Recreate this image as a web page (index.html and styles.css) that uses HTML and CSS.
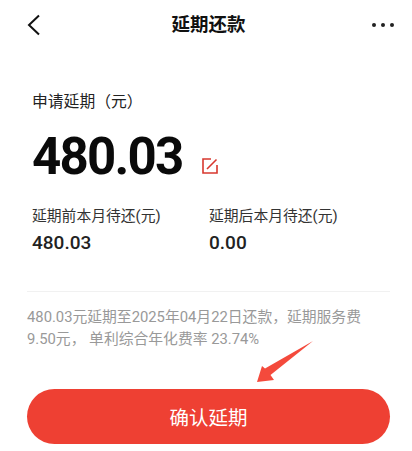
FILE: index.html
```html
<!DOCTYPE html>
<html lang="zh-CN">
<head>
<meta charset="utf-8">
<title>延期还款</title>
<link rel="stylesheet" href="styles.css">
</head>
<body>
<div class="page">
  <header class="nav">
    <svg class="back" width="14" height="22" viewBox="0 0 14 22"><path d="M12 1.5 2 11l10 9.5" fill="none" stroke="#111" stroke-width="2"/></svg>
    <h1 class="title">延期还款</h1>
    <div class="more"><i></i><i></i><i></i></div>
  </header>
  <main class="content">
    <div class="label">申请延期（元）</div>
    <div class="amount-row">
      <span class="amount">480.03</span>
      <svg class="edit" width="16" height="16" viewBox="0 0 16 16"><path d="M9 1H1v14h14V7" fill="none" stroke="#d8382f" stroke-width="1.6"/><path d="M5 11 14.5 1.5" fill="none" stroke="#d8382f" stroke-width="1.6"/></svg>
    </div>
    <div class="stats">
      <div class="stat">
        <div class="stat-label">延期前本月待还(元)</div>
        <div class="stat-value">480.03</div>
      </div>
      <div class="stat">
        <div class="stat-label">延期后本月待还(元)</div>
        <div class="stat-value">0.00</div>
      </div>
    </div>
  </main>
  <p class="note">480.03元延期至2025年04月22日还款，延期服务费9.50元， 单利综合年化费率 23.74%</p>
  <div class="action">
    <svg class="arrow" width="57" height="42" viewBox="0 0 57 42"><path d="M56 0 8 27.5 5 25 0 41 17 39 13.5 34Z" fill="#f44a3c"/></svg>
    <button class="confirm">确认延期</button>
  </div>
</div>
</body>
</html>
```
FILE: styles.css
```css
* { box-sizing: border-box; }
html, body { margin: 0; padding: 0; background: #fff; }
body { font-family: Roboto, "Noto Sans CJK SC", sans-serif; }
.page { width: 412px; height: 451px; overflow: hidden; display: flex; flex-direction: column; padding: 0 22px 7px 27px; }
.nav { height: 50px; display: grid; grid-template-columns: 1fr auto 1fr; align-items: center; margin-right: -4px; padding-right: 4px; }
.title { margin: 0; font-size: 18.5px; line-height: 24px; font-weight: 700; color: #111; }
.more { display: flex; gap: 5px; justify-self: end; margin-right: -4px; }
.more i { width: 4px; height: 4px; border-radius: 50%; background: #222; }
.content { padding: 41px 0 0 5px; }
.label { font-size: 15.8px; line-height: 22px; color: #222; }
.amount-row { display: flex; align-items: flex-end; gap: 19px; margin-top: 19px; height: 50px; }
.amount { font-size: 51px; line-height: 50px; font-weight: 700; color: #0a0a0a; letter-spacing: -1.75px; }
.edit { margin-bottom: 8px; }
.stats { display: flex; margin-top: 24px; }
.stat { width: 177px; }
.stat-label { font-size: 14.8px; line-height: 20px; color: #333; }
.stat-value { font-size: 19px; line-height: 24px; font-weight: 500; color: #222; margin-top: 5px; }
.note { margin: 36px 0 0; padding: 14px 10px 0 0; border-top: 1px solid #f1f1f1; font-size: 14.8px; line-height: 22px; color: #999; }
.action { margin-top: auto; position: relative; }
.arrow { position: absolute; left: 230px; top: -48px; }
.confirm { width: 100%; height: 55px; border: 0; border-radius: 28px; background: #ee4033; color: #fff; font: 400 19.5px Roboto, "Noto Sans CJK SC", sans-serif; display: block; }
```
